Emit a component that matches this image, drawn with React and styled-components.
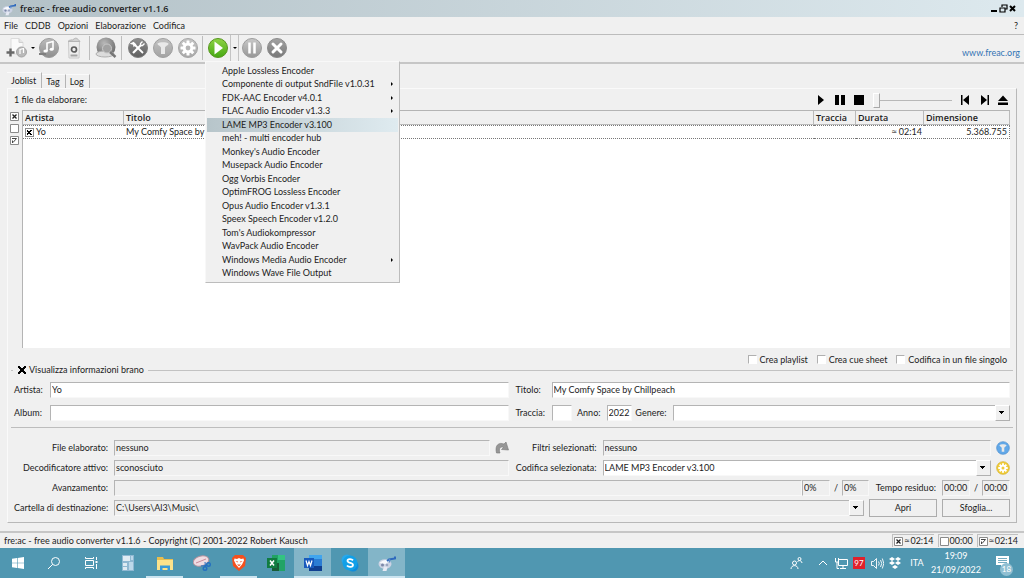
import React from "react";
import styled, { createGlobalStyle, css } from "styled-components";

const GlobalStyle = createGlobalStyle`
    * {
        box-sizing: border-box;
    }

    body {
        margin: 0;
        background: #f0f0f0;
    }

    body, button, input, select {
        font-family: Lato, "Open Sans", sans-serif;
        font-size: 9px;
        line-height: 12px;
        color: #1c1c1c;
    }

    button, input, select {
        margin: 0;
        padding: 0;
        border: 0;
        border-radius: 0;
        outline: 0;
        background: none;
    }
`;

const Window = styled.div`
    display: flex;
    flex-direction: column;
    min-height: 100vh;
`;

const TitleBar = styled.header`
    display: flex;
    align-items: center;
    gap: 4px;
    height: 17px;
    padding: 0 7px 0 2px;
    background: linear-gradient(to right, #b3c1c7, #dde9ee);
`;

const WindowTitle = styled.h1`
    flex: 1;
    margin: 0;
    font-family: "Open Sans", sans-serif;
    font-size: 9px;
    line-height: 12px;
    font-weight: 600;
`;

const WindowButton = styled.button`
    display: block;
    width: 9px;
    height: 9px;
    margin-left: -4px;
`;

const MenuBar = styled.nav`
    display: flex;
    align-items: center;
    gap: 7px;
    height: 18px;
    padding: 0 6px 0 4px;
    border-bottom: 1px solid #bcbcbc;
`;

const MenuButton = styled.button`
    margin-left: ${props => (props.$end ? "auto" : "0")};
`;

const ToolBar = styled.div`
    display: flex;
    align-items: center;
    height: 29px;
    padding: 0 4px 1px;
    border-bottom: 2px solid #c6c6c6;
`;

const ToolButton = styled.button`
    display: grid;
    place-items: center;
    width: 25px;
    height: 26px;
`;

const DropArrow = styled.button`
    display: grid;
    place-items: center;
    width: ${props => (props.$framed ? 9 : 7)}px;
    height: 26px;
    border-left: ${props => (props.$framed ? "1px solid #c4c4c4" : "0")};
    border-right: ${props => (props.$framed ? "1px solid #c4c4c4" : "0")};

    &::before {
        content: "";
        border: 2px solid transparent;
        border-top-color: #000;
        border-bottom: 0;
    }
`;

const ToolSeparator = styled.span`
    width: 1px;
    height: 24px;
    margin: 0 ${props => (props.$tight ? 2 : 3)}px;
    background: #bdbdbd;
`;

const EncodeGroup = styled.div`
    position: relative;
    display: flex;
`;

const EncoderMenu = styled.ul`
    position: absolute;
    z-index: 1;
    top: 100%;
    left: 0;
    display: flex;
    flex-direction: column;
    width: 195px;
    height: 222px;
    margin: 0;
    padding: 2px 1px;
    list-style: none;
    background: #f0f0f0;
    border: 1px solid #bcbcbc;
    border-top-color: #f8f8f8;
    border-left-color: #f8f8f8;
`;

const EncoderItem = styled.li`
    flex: 1;
    display: flex;
    background: ${props =>
        props.$active
            ? "linear-gradient(to right, #b7c5ca, #dfebf0)"
            : "transparent"};

    button {
        flex: 1;
        display: flex;
        align-items: center;
        justify-content: space-between;
        padding: 0 5px 0 15px;
        text-align: left;
    }
`;

const SubmenuArrow = styled.span`
    border: 2px solid transparent;
    border-left-color: #000;
    border-right: 0;
`;

const SiteLink = styled.a`
    margin-left: auto;
    color: #3474b4;
    text-decoration: none;
    padding-top: 9px;
`;

const Content = styled.main`
    flex: 1;
    display: flex;
    flex-direction: column;
    padding: 8px 7px 8px 7px;
`;

const Tabs = styled.div`
    display: flex;
    align-items: flex-end;
    height: 16px;
`;

const Tab = styled.button`
    height: ${props => (props.$active ? 16 : 14)}px;
    padding: 0 5px 0 4px;
    border-right: 1px solid #b4b4b4;
    border-top: 1px solid #fafafa;
`;

const Panel = styled.section`
    flex: 1;
    display: flex;
    flex-direction: column;
    padding-bottom: 6px;
    border: 1px solid #b8b8b8;
    border-top-color: #fafafa;
    border-left-color: #fafafa;
`;

const Player = styled.div`
    display: flex;
    align-items: center;
    height: 21px;
    padding: 1px 6px 0;
    gap: 5px;
`;

const Summary = styled.span`
    flex: 1;
`;

const PlayerButton = styled.button`
    display: block;
    width: 14px;
    height: 14px;
`;

const Seek = styled.input`
    appearance: none;
    width: 79px;
    height: 16px;
    margin: 0 1px 0 2px;
    background: linear-gradient(#b8b8b8, #b8b8b8) center / 100% 1px no-repeat;

    &::-webkit-slider-thumb {
        appearance: none;
        width: 7px;
        height: 15px;
        background: #f0f0f0;
        border: 1px solid #a8a8a8;
        border-top-color: #fff;
        border-left-color: #fff;
    }
`;

const ListArea = styled.div`
    flex: 1;
    display: flex;
    gap: 2px;
    padding: 0 6px 0 2px;
`;

const SelectColumn = styled.div`
    display: flex;
    flex-direction: column;
    gap: 3px;
    width: 10px;
    padding: 2px 0;
`;

const MarkButton = styled.button`
    display: block;
    flex: none;
    width: 9px;
    height: 9px;
`;

const TrackList = styled.div`
    flex: 1;
    background: #fff;
    border-left: 1px solid #b4b4b4;
    border-top: 1px solid #b4b4b4;
`;

const Table = styled.table`
    width: 100%;
    table-layout: fixed;
    border-collapse: separate;
    border-spacing: 0;

    th {
        height: 14px;
        padding: 0 2px;
        font-family: "Open Sans", sans-serif;
        font-weight: 600;
        text-align: left;
        background: #f0f0f0;
        border-right: 1px solid #bababa;
        border-bottom: 1px solid #bababa;
    }

    td {
        height: 14px;
        padding: 0 2px;
        white-space: nowrap;
        border-top: 1px dotted #777;
        border-bottom: 1px dotted #777;
    }

    td:last-child {
        border-right: 1px dotted #777;
    }
`;

const Col = styled.col`
    width: ${props => props.$width};
`;

const NumberCell = styled.td`
    text-align: right;
`;

const Approx = styled.span`
    font-family: "Open Sans", sans-serif;
`;

const TrackCell = styled.label`
    display: flex;
    align-items: center;
    gap: 2px;
`;

const CheckBox = styled.input`
    appearance: none;
    flex: none;
    width: 9px;
    height: 9px;
    background-color: ${props => (props.$plain ? "transparent" : "#fff")};
    border: ${props => (props.$plain ? "0" : "1px solid #8a8a8a")};
    ${props =>
        props.$soft &&
        css`
            border-color: #b0b0b0 #fff #fff #b0b0b0;
        `}

    &:checked {
        background-image: linear-gradient(
                45deg,
                transparent 40%,
                #000 40% 60%,
                transparent 60%
            ),
            linear-gradient(
                -45deg,
                transparent 40%,
                #000 40% 60%,
                transparent 60%
            );
        background-size: ${props => (props.$plain ? "8px 8px" : "5px 5px")};
        background-position: center;
        background-repeat: no-repeat;
    }
`;

const Options = styled.div`
    display: flex;
    justify-content: flex-end;
    gap: 9px;
    height: 21px;
    padding: 2px 9px 0;
`;

const Option = styled.label`
    display: flex;
    align-items: center;
    gap: 3px;
`;

const GroupTitle = styled.div`
    display: flex;
    align-items: center;
    gap: 4px;
    height: 2px;
    margin: 0 3px;

    &::before,
    &::after {
        content: "";
        width: 2px;
        height: 1px;
        background: #c2c2c2;
    }

    &::after {
        flex: 1;
    }
`;

const Rule = styled.hr`
    height: 1px;
    margin: 6px 3px 11px;
    border: 0;
    background: #bdbdbd;
`;

const InfoGrid = styled.div`
    display: grid;
    grid-template-columns: 1fr 1fr;
    gap: 6px 7px;
    padding: 10px 6px 0;
`;

const StatusGrid = styled.div`
    display: grid;
    grid-template-columns: 1fr 1fr;
    gap: 3px 7px;
    padding: 0 6px;
`;

const Row = styled.div`
    display: flex;
    align-items: center;
    height: 17px;
    min-width: 0;
    grid-column: ${props => (props.$wide ? "1 / -1" : "auto")};
`;

const Label = styled.label`
    flex: none;
    width: ${props => props.$width};
    padding-right: ${props => (props.$right ? "6px" : "0")};
    text-align: ${props => (props.$right ? "right" : "left")};
    white-space: nowrap;
`;

const sunken = css`
    height: 16px;
    padding: 0 0 0 1px;
    border: 1px solid #f8f8f8;
    border-top-color: #b4b4b4;
    border-left-color: #b4b4b4;
    background: ${props => (props.$muted ? "#efefef" : "#fff")};
`;

const Field = styled.input`
    ${sunken}
    flex: ${props => (props.$width ? "none" : "1")};
    width: ${props => props.$width || "auto"};
    min-width: 0;
`;

const Bar = styled.div`
    ${sunken}
    flex: 1;
`;

const Slash = styled.span`
    width: 12px;
    text-align: center;
`;

const ComboBox = styled.div`
    flex: 1;
    display: grid;
    min-width: 0;

    select,
    &::after {
        grid-area: 1 / 1;
    }

    select {
        ${sunken}
        appearance: none;
        width: 100%;
    }

    &::after {
        content: "";
        justify-self: end;
        align-self: center;
        width: 13px;
        height: 14px;
        pointer-events: none;
        border: 1px solid #b0b0b0;
        border-top-color: #fff;
        border-left-color: #fff;
        background: linear-gradient(#000, #000) 3px 5px / 5px 1px no-repeat,
            linear-gradient(#000, #000) 4px 6px / 3px 1px no-repeat,
            linear-gradient(#000, #000) 5px 7px / 1px 1px no-repeat #f0f0f0;
    }
`;

const SideButton = styled.button`
    display: grid;
    place-items: center;
    flex: none;
    width: 14px;
    height: 16px;
    margin-left: 5px;
`;

const PushButton = styled.button`
    flex: none;
    width: 68px;
    height: 18px;
    margin-left: 5px;
    border: 1px solid #acacac;
`;

const StatusBar = styled.footer`
    display: flex;
    align-items: center;
    gap: 4px;
    height: 17px;
    padding: 0 6px 0 4px;
    border-top: 2px solid #c6c6c6;
`;

const StatusText = styled.span`
    flex: 1;
`;

const StatusCell = styled.span`
    display: flex;
    align-items: center;
    gap: 1px;
    padding-left: 1px;
    white-space: nowrap;
    height: 13px;
    border-top: 1px solid #c0c0c0;
    border-left: 1px solid #c0c0c0;
`;

const TaskBar = styled.div`
    display: flex;
    align-items: stretch;
    height: 30px;
    color: #fff;
    background: #5097b1;
`;

const TaskButton = styled.button`
    display: grid;
    place-items: center;
    width: ${props => props.$width || 37}px;
    background: ${props => (props.$active ? "#83b5c8" : "transparent")};
    border-bottom: 2px solid ${props => (props.$open ? "#cbe4f0" : "transparent")};
    border-top: 2px solid transparent;
    background-clip: border-box;
`;

const Tray = styled.div`
    display: flex;
    align-items: center;
    gap: 4px;
    margin-left: auto;
    padding-right: 11px;
`;

const TrayButton = styled.button`
    display: grid;
    place-items: center;
    min-width: 14px;
    height: 30px;
    color: #fff;
    margin-right: ${props => props.$after || 0}px;
`;

const Clock = styled.time`
    width: 50px;
    text-align: center;
    line-height: 14px;
`;

const Badge = styled.span`
    width: 12px;
    text-align: center;
    font-size: 8px;
    background: #e0202b;
`;

const Notifications = styled.span`
    position: relative;
    width: 20px;
    height: 16px;
    margin-left: 8px;
`;

const Count = styled.span`
    position: absolute;
    right: 0;
    bottom: -5px;
    width: 13px;
    height: 13px;
    border-radius: 50%;
    font-size: 8px;
    line-height: 13px;
    text-align: center;
    background: #8fbfd2;
`;

const Svg = ({ size = 22, box = 22, children }) => (
    <svg
        width={size}
        height={size}
        viewBox={`0 0 ${box} ${box}`}
        fill="none"
        aria-hidden="true"
    >
        {children}
    </svg>
);

const Disc = ({ from = "#c9c9c9", to = "#7c7c7c", ring = "#8b8b8b", id, children }) => (
    <Svg>
        <defs>
            <linearGradient id={id} x1="0" y1="0" x2="0" y2="1">
                <stop offset="0" stopColor={from} />
                <stop offset="1" stopColor={to} />
            </linearGradient>
        </defs>
        <circle cx="11" cy="11" r="9.5" fill={`url(#${id})`} stroke={ring} />
        {children}
    </Svg>
);

const gearTeeth = [0, 45, 90, 135, 180, 225, 270, 315];

const Gear = ({ hole }) => (
    <g>
        {gearTeeth.map(angle => (
            <rect
                key={angle}
                x="9.5"
                y="3.5"
                width="3"
                height="4"
                rx="0.5"
                fill="#fff"
                transform={`rotate(${angle} 11 11)`}
            />
        ))}
        <circle cx="11" cy="11" r="5.2" fill="#fff" />
        <circle cx="11" cy="11" r="2.4" fill={hole} />
    </g>
);

const FunnelShape = () => (
    <path
        d="M5.500 6.500c2-1.600 9-1.600 11 0 0 1.800-3 2.500-3.500 4V17H9v-6.500c-.5-1.500-3.500-2.200-3.500-4Z"
        fill="#e9e9e9"
    />
);

const AppIcon = ({ size }) => (
    <Svg size={size} box={18}>
        <ellipse cx="7" cy="10" rx="6.500" ry="4.800" fill="#ccd3e4" />
        <path d="M1.500 9c3-3 7-4 10-2l-4 3z" fill="#f8f9fd" />
        <circle cx="4.500" cy="11" r="1.500" fill="#7d88a8" />
        <circle cx="9" cy="11" r="1.300" fill="#9ba5c0" />
        <path d="M6 12.500 4.500 17h4L9.500 13z" fill="#e6e9f4" />
        <path d="m9 7 2-1.500 6-1V2.500" stroke="#2f6abd" strokeWidth="2" />
        <path d="M11.500 8.500V5" stroke="#5b89cb" strokeWidth="1.500" />
    </Svg>
);

const AddFileIcon = () => (
    <Svg>
        <path d="M5 1.500h8l4 4V17H5z" fill="#fafafa" stroke="#dcdcdc" />
        <path d="M13 1.500v4h4" fill="#e4e4e4" stroke="#d0d0d0" />
        <circle cx="15.500" cy="15" r="5" fill="#b9b9b9" stroke="#a3a3a3" />
        <path d="M14 17v-4.500l3.500-1v4.500" stroke="#fff" strokeWidth="1.200" />
        <path d="M4.500 11.500v8M.5 15.500h8" stroke="#686868" strokeWidth="2.400" />
    </Svg>
);

const AddDiscIcon = () => (
    <Disc id="disc-add" from="#bcbcbc" to="#8d8d8d" ring="#9b9b9b">
        <path d="M9 14V6l6-1.500V12" stroke="#fff" strokeWidth="1.600" />
        <ellipse cx="7.600" cy="14" rx="2.200" ry="1.600" fill="#fff" />
        <ellipse cx="13.600" cy="12.300" rx="2" ry="1.500" fill="#fff" />
        <path d="M1 17h7" stroke="#808080" strokeWidth="2" />
    </Disc>
);

const BinIcon = () => (
    <Svg>
        <path d="M5.500 4h11l-.5 17H6z" fill="#ededed" stroke="#c9c9c9" />
        <path d="M5 4.500C7 2 9 4 11 2s4 0 6 2.500z" fill="#d2d2d2" stroke="#b5b5b5" />
        <circle cx="11" cy="12.500" r="2.500" stroke="#5c5c5c" strokeWidth="1.700" />
        <path d="M7.500 18.500h7" stroke="#a5a5a5" strokeWidth="2" />
    </Svg>
);

const CddbIcon = () => (
    <Svg>
        <defs>
            <radialGradient id="globe" cx=".4" cy=".3" r=".7">
                <stop offset="0" stopColor="#b8b8b8" />
                <stop offset="1" stopColor="#6f6f6f" />
            </radialGradient>
        </defs>
        <circle cx="11" cy="10" r="9.500" fill="url(#globe)" />
        <ellipse cx="10" cy="17" rx="9" ry="3" fill="#dcdcdc" stroke="#b0b0b0" />
        <circle cx="12" cy="11.500" r="4.500" fill="#a2a2a2" stroke="#c9c9c9" />
        <path d="m15 15 5.500 5" stroke="#777" strokeWidth="2.500" />
    </Svg>
);

const SettingsIcon = () => (
    <Disc id="disc-settings" from="#8f8f8f" to="#5f5f5f" ring="#808080">
        <path d="M7.500 7.500 16 16" stroke="#fff" strokeWidth="1.800" />
        <path d="m6 16 8-8" stroke="#fff" strokeWidth="2.200" />
        <path
            d="M15.500 4.500 13.500 6.500v2h2l2-2M4.500 6.500l2 .5.5 2 1.500-1.500-2-2z"
            stroke="#fff"
            strokeWidth="1.300"
        />
    </Disc>
);

const FilterIcon = () => (
    <Disc id="disc-filter" from="#c2c2c2" to="#a3a3a3" ring="#a0a0a0">
        <FunnelShape />
    </Disc>
);

const EncoderIcon = () => (
    <Disc id="disc-encoder" from="#c6c6c6" to="#a8a8a8" ring="#a6a6a6">
        <Gear hole="#b5b5b5" />
    </Disc>
);

const PlayIcon = () => (
    <Disc id="disc-play" from="#8fd345" to="#45a812" ring="#57961f">
        <path d="M7.500 4.500v13l8.500-6.500z" fill="#fff" />
    </Disc>
);

const PauseIcon = () => (
    <Disc id="disc-pause" from="#c9c9c9" to="#969696" ring="#9d9d9d">
        <path d="M8.500 5.500v11M13.500 5.500v11" stroke="#fff" strokeWidth="2.500" />
    </Disc>
);

const StopIcon = () => (
    <Disc id="disc-stop" from="#a3a3a3" to="#787878">
        <path d="m7 7 8 8m0-8-8 8" stroke="#fff" strokeWidth="3" strokeLinecap="round" />
    </Disc>
);

const Mark = ({ kind }) => (
    <Svg size={9} box={9}>
        <path d="M.5.5h8v8h-8z" fill="#fff" stroke="#8a8a8a" />
        {kind === "all" && (
            <path d="m2.500 2.500 4 4m0-4-4 4" stroke="#222" strokeWidth="1.300" />
        )}
        {kind === "toggle" && (
            <path d="M2 2.500h4.500L3 6.500M2.500 4.500V7" stroke="#444" />
        )}
    </Svg>
);

const playerShapes = {
    Play: "M4 2v10l6-5z",
    Pause: "M2 2h4v10H2zM8 2h4v10H8z",
    Stop: "M2 2h10v10H2z",
    Previous: "M3 2h1.500v10H3zM11 2v10L5 7z",
    Next: "M10.500 2H12v10h-1.500zM4 2v10l6-5z",
    Eject: "M7 2.500 12 8H2zM2 9.500h10V12H2z"
};

const PlayerControl = ({ name }) => (
    <PlayerButton aria-label={name}>
        <Svg size={14} box={14}>
            <path d={playerShapes[name]} fill="#000" />
        </Svg>
    </PlayerButton>
);

const encoders = [
    { name: "Apple Lossless Encoder" },
    { name: "Componente di output SndFile v1.0.31", submenu: true },
    { name: "FDK-AAC Encoder v4.0.1", submenu: true },
    { name: "FLAC Audio Encoder v1.3.3", submenu: true },
    { name: "LAME MP3 Encoder v3.100", active: true },
    { name: "meh! - multi encoder hub" },
    { name: "Monkey's Audio Encoder" },
    { name: "Musepack Audio Encoder" },
    { name: "Ogg Vorbis Encoder" },
    { name: "OptimFROG Lossless Encoder" },
    { name: "Opus Audio Encoder v1.3.1" },
    { name: "Speex Speech Encoder v1.2.0" },
    { name: "Tom's Audiokompressor" },
    { name: "WavPack Audio Encoder" },
    { name: "Windows Media Audio Encoder", submenu: true },
    { name: "Windows Wave File Output" }
];

const MainToolBar = () => (
    <ToolBar>
        <ToolButton aria-label="Aggiungi file"><AddFileIcon /></ToolButton>
        <DropArrow aria-label="Altri modi di aggiungere" />
        <ToolButton aria-label="Aggiungi CD"><AddDiscIcon /></ToolButton>
        <ToolButton aria-label="Svuota lista"><BinIcon /></ToolButton>
        <ToolSeparator />
        <ToolButton aria-label="CDDB"><CddbIcon /></ToolButton>
        <ToolSeparator />
        <ToolButton aria-label="Impostazioni"><SettingsIcon /></ToolButton>
        <ToolButton aria-label="Filtri"><FilterIcon /></ToolButton>
        <ToolButton aria-label="Encoder"><EncoderIcon /></ToolButton>
        <ToolSeparator $tight />
        <EncodeGroup>
            <ToolButton aria-label="Avvia codifica"><PlayIcon /></ToolButton>
            <DropArrow $framed aria-label="Scegli encoder" aria-expanded="true" />
            <EncoderMenu>
                {encoders.map(({ name, submenu, active }) => (
                    <EncoderItem key={name} $active={active}>
                        <button>
                            {name}
                            {submenu && <SubmenuArrow />}
                        </button>
                    </EncoderItem>
                ))}
            </EncoderMenu>
        </EncodeGroup>
        <ToolButton aria-label="Pausa"><PauseIcon /></ToolButton>
        <ToolButton aria-label="Interrompi"><StopIcon /></ToolButton>
        <SiteLink href="https://www.freac.org">www.freac.org</SiteLink>
    </ToolBar>
);

const Joblist = () => (
    <>
        <Player>
            <Summary>1 file da elaborare:</Summary>
            <PlayerControl name="Play" />
            <PlayerControl name="Pause" />
            <PlayerControl name="Stop" />
            <Seek type="range" defaultValue="0" aria-label="Posizione" />
            <PlayerControl name="Previous" />
            <PlayerControl name="Next" />
            <PlayerControl name="Eject" />
        </Player>
        <ListArea>
            <SelectColumn>
                <MarkButton aria-label="Seleziona tutti"><Mark kind="all" /></MarkButton>
                <MarkButton aria-label="Deseleziona tutti"><Mark /></MarkButton>
                <MarkButton aria-label="Inverti selezione"><Mark kind="toggle" /></MarkButton>
            </SelectColumn>
            <TrackList>
                <Table>
                    <colgroup>
                        <Col $width="101px" />
                        <Col />
                        <Col $width="42px" />
                        <Col $width="68px" />
                        <Col $width="86px" />
                    </colgroup>
                    <thead>
                        <tr>
                            <th>Artista</th>
                            <th>Titolo</th>
                            <th>Traccia</th>
                            <th>Durata</th>
                            <th>Dimensione</th>
                        </tr>
                    </thead>
                    <tbody>
                        <tr>
                            <td>
                                <TrackCell>
                                    <CheckBox type="checkbox" defaultChecked />
                                    Yo
                                </TrackCell>
                            </td>
                            <td>My Comfy Space by Chillpeach</td>
                            <td />
                            <NumberCell><Approx>≈</Approx> 02:14</NumberCell>
                            <NumberCell>5.368.755</NumberCell>
                        </tr>
                    </tbody>
                </Table>
            </TrackList>
        </ListArea>
        <Options>
            {["Crea playlist", "Crea cue sheet", "Codifica in un file singolo"].map(
                text => (
                    <Option key={text}>
                        <CheckBox type="checkbox" $soft />
                        {text}
                    </Option>
                )
            )}
        </Options>
    </>
);

const TrackInfo = () => (
    <>
        <GroupTitle>
            <Option>
                <CheckBox type="checkbox" defaultChecked $plain />
                Visualizza informazioni brano
            </Option>
        </GroupTitle>
        <InfoGrid>
            <Row>
                <Label htmlFor="artist" $width="36px">Artista:</Label>
                <Field id="artist" defaultValue="Yo" />
            </Row>
            <Row>
                <Label htmlFor="title" $width="36px">Titolo:</Label>
                <Field id="title" defaultValue="My Comfy Space by Chillpeach" />
            </Row>
            <Row>
                <Label htmlFor="album" $width="36px">Album:</Label>
                <Field id="album" />
            </Row>
            <Row>
                <Label htmlFor="track" $width="36px">Traccia:</Label>
                <Field id="track" $width="20px" />
                <Label htmlFor="year" $width="35px" $right>Anno:</Label>
                <Field id="year" $width="25px" defaultValue="2022" />
                <Label htmlFor="genre" $width="41px" $right>Genere:</Label>
                <ComboBox>
                    <select id="genre" />
                </ComboBox>
            </Row>
        </InfoGrid>
    </>
);

const EncodeStatus = () => (
    <StatusGrid>
        <Row>
            <Label htmlFor="file" $width="100px" $right>File elaborato:</Label>
            <Field id="file" $muted readOnly value="nessuno" />
            <SideButton aria-label="Salta brano">
                <Svg size={14} box={14}>
                    <path
                        d="M1.500 12C-.5 4 4 1 9 3l2-2 2.500 8-7-.5 2-2C5 5 3.500 8 5 12z"
                        fill="#969696"
                        stroke="#777"
                        strokeWidth=".6"
                    />
                </Svg>
            </SideButton>
        </Row>
        <Row>
            <Label htmlFor="filters" $width="87px" $right>Filtri selezionati:</Label>
            <Field id="filters" $muted readOnly value="nessuno" />
            <SideButton aria-label="Configura filtri">
                <Svg size={14}>
                    <circle cx="11" cy="11" r="10" fill="#62a8e8" stroke="#4a8ccb" />
                    <FunnelShape />
                </Svg>
            </SideButton>
        </Row>
        <Row>
            <Label htmlFor="decoder" $width="100px" $right>Decodificatore attivo:</Label>
            <Field id="decoder" $muted readOnly value="sconosciuto" />
        </Row>
        <Row>
            <Label htmlFor="encoder" $width="87px" $right>Codifica selezionata:</Label>
            <ComboBox>
                <select id="encoder">
                    <option>LAME MP3 Encoder v3.100</option>
                </select>
            </ComboBox>
            <SideButton aria-label="Configura encoder">
                <Svg size={14}>
                    <circle cx="11" cy="11" r="10" fill="#f0cc3a" stroke="#d2ac22" />
                    <Gear hole="#f0cc3a" />
                </Svg>
            </SideButton>
        </Row>
        <Row $wide>
            <Label as="span" $width="100px" $right>Avanzamento:</Label>
            <Bar $muted role="progressbar" aria-label="Avanzamento" aria-valuenow="0" />
            <Field $muted $width="28px" readOnly value="0%" aria-label="Brano" />
            <Slash>/</Slash>
            <Field $muted $width="27px" readOnly value="0%" aria-label="Totale" />
            <Label htmlFor="left" $width="73px" $right>Tempo residuo:</Label>
            <Field id="left" $muted $width="28px" readOnly value="00:00" />
            <Slash>/</Slash>
            <Field $muted $width="28px" readOnly value="00:00" aria-label="Tempo totale" />
        </Row>
        <Row $wide>
            <Label htmlFor="folder" $width="100px" $right>Cartella di destinazione:</Label>
            <ComboBox $muted>
                <select id="folder">
                    <option>C:\Users\Al3\Music\</option>
                </select>
            </ComboBox>
            <PushButton>Apri</PushButton>
            <PushButton>Sfoglia...</PushButton>
        </Row>
    </StatusGrid>
);

const apps = [
    {
        name: "Calcolatrice",
        icon: (
            <g>
                <path d="M3 1h12v16H3z" fill="#8fb8d2" />
                <path d="M4 2h7v5H4zM4 9h4v3H4zM4 13h4v3H4z" fill="#dfebf3" />
                <path d="M10 8h4v8h-4zM12 2h2v4h-2z" fill="#bcd8ea" />
            </g>
        )
    },
    {
        name: "Esplora file",
        open: true,
        icon: (
            <g>
                <path d="M1 3h6l1 2h9v11H1z" fill="#e8bd4e" />
                <path d="M1 6h16v10H1z" fill="#fbe28b" />
                <path d="M4 17v-5.500h10V17h-2.500v-3h-5v3z" fill="#3a9bd8" />
            </g>
        )
    },
    {
        name: "Strumento di cattura",
        icon: (
            <g>
                <ellipse cx="8" cy="7" rx="8" ry="5" fill="#efdce2" stroke="#b08f9b" transform="rotate(-15 8 7)" />
                <path d="m3 9 10-4" stroke="#c98a9b" />
                <circle cx="12" cy="14.500" r="1.800" stroke="#246fc0" strokeWidth="1.400" />
                <circle cx="15.500" cy="10.500" r="1.800" stroke="#246fc0" strokeWidth="1.400" />
                <path d="m8 12 6-.5M12 8l.5 5" stroke="#246fc0" />
            </g>
        )
    },
    {
        name: "Brave",
        open: true,
        icon: (
            <g>
                <path d="m5 1-3 3 1 8 6 5 6-5 1-8-3-3z" fill="#f4501e" />
                <path d="m4.500 4.500 2.500.5 2-1 2 1 2.500-.5.5 2-2 4L9 14l-3-3.500-2-4z" fill="#fff" />
                <path d="m5.500 7 2.500.5-.5 1zM12.500 7l-2.500.5.5 1zM7 10.500h4l-2 1.800z" fill="#f4501e" />
            </g>
        )
    },
    {
        name: "Excel",
        icon: (
            <g>
                <path d="M5 1h13v16H5z" fill="#21a366" />
                <path d="M11 1h7v5h-7z" fill="#33c481" />
                <path d="M5 9h7v8H5z" fill="#185c37" />
                <path d="M0 4h10v10H0z" fill="#107c41" />
                <path d="m3 6.500 4 5m0-5-4 5" stroke="#fff" strokeWidth="1.500" />
            </g>
        )
    },
    {
        name: "Word",
        open: true,
        active: true,
        icon: (
            <g>
                <path d="M5 1h13v16H5z" fill="#2b7cd3" />
                <path d="M5 1h13v4H5z" fill="#41a5ee" />
                <path d="M5 12h13v5H5z" fill="#103f91" />
                <path d="M0 4h10v10H0z" fill="#185abd" />
                <path d="m2 6.500 1.500 5 1.500-4 1.500 4 1.500-5" stroke="#fff" strokeWidth="1.200" />
            </g>
        )
    },
    {
        name: "Skype",
        open: true,
        icon: (
            <g>
                <circle cx="6" cy="6" r="5.500" fill="#28a8ea" />
                <circle cx="12" cy="12" r="5.500" fill="#0f8bdb" />
                <circle cx="9" cy="9" r="7.500" fill="#12a0e8" />
                <path
                    d="M12 6.300C10.500 4.500 6.500 4.700 6.500 6.800c0 2.700 5.500 1.500 5.500 4.200 0 2.300-4.500 2.500-6 .5"
                    stroke="#fff"
                    strokeWidth="1.800"
                />
            </g>
        )
    },
    { name: "fre:ac", open: true, active: true }
];

const WindowsTaskBar = () => (
    <TaskBar>
        <TaskButton $width={36} aria-label="Start">
            <Svg size={12} box={12}>
                <path
                    d="M0 1.700 5 1v4.700H0zM5.600.9 12 0v5.700H5.600zM0 6.300h5V11l-5-.7zM5.600 6.300H12V12l-6.400-.9z"
                    fill="#fff"
                />
            </Svg>
        </TaskButton>
        <TaskButton $width={36} aria-label="Cerca">
            <Svg size={14} box={14}>
                <circle cx="8.500" cy="5.500" r="4" stroke="#fff" />
                <path d="M5.700 8.300 1 13" stroke="#fff" />
            </Svg>
        </TaskButton>
        <TaskButton $width={37} aria-label="Visualizzazione attività">
            <Svg size={14} box={14}>
                <path d="M1.500 4.500h8v5h-8zM1.500 1v1.500h8V1M1.500 13v-1.500h8V13M12.500 1v3M12.500 8v5" stroke="#fff" />
                <path d="M11.500 5h2v2h-2z" fill="#fff" />
            </Svg>
        </TaskButton>
        {apps.map(({ name, icon, open, active }) => (
            <TaskButton key={name} $open={open} $active={active} aria-label={name}>
                {icon ? <Svg size={18} box={18}>{icon}</Svg> : <AppIcon size={18} />}
            </TaskButton>
        ))}
        <Tray>
            <TrayButton aria-label="Contatti" $after={9}>
                <Svg size={13} box={13}>
                    <circle cx="4.500" cy="6" r="2" stroke="#fff" />
                    <path d="M1 12c0-4.500 7-4.500 7 0M7.500 5c.5-2 4-2 4.500 1" stroke="#fff" />
                    <circle cx="9.500" cy="2" r="1.500" stroke="#fff" />
                </Svg>
            </TrayButton>
            <TrayButton aria-label="Icone nascoste">
                <Svg size={10} box={10}>
                    <path d="m1 7 4-4 4 4" stroke="#fff" />
                </Svg>
            </TrayButton>
            <TrayButton aria-label="Rete">
                <Svg size={13} box={13}>
                    <path d="M3.500 2.500h9v6h-9zM8 8.500v3M5 11.500h6M.5 1v4h3V1M2 5v6.500h2" stroke="#fff" />
                </Svg>
            </TrayButton>
            <TrayButton aria-label="Temperatura">
                <Badge>97</Badge>
            </TrayButton>
            <TrayButton aria-label="Volume">
                <Svg size={13} box={13}>
                    <path d="M.5 4.500h2l3-3v10l-3-3h-2zM7.500 4.500q1.500 2 0 4M9.500 3q2.500 3.500 0 7M11.300 1.500q3 5 0 10" stroke="#fff" strokeWidth=".9" />
                </Svg>
            </TrayButton>
            <TrayButton aria-label="Dropbox" $after={4}>
                <Svg size={12} box={12}>
                    <path
                        d="m3 0 3 2-3 2-3-2zM9 0l3 2-3 2-3-2zM3 4l3 2-3 2-3-2zM9 4l3 2-3 2-3-2zM6 8l3 2-3 2-3-2z"
                        fill="#fff"
                    />
                </Svg>
            </TrayButton>
            <TrayButton $after={3}>ITA</TrayButton>
            <Clock>
                19:09
                <br />
                21/09/2022
            </Clock>
            <TrayButton aria-label="Notifiche, 18 nuove">
                <Notifications>
                    <Svg size={14} box={14}>
                        <path d="M0 1h13v9H8l-3 3v-3H0z" fill="#fff" />
                        <path d="M2 3.500h9M2 5.500h9M2 7.500h9" stroke="#5097b1" strokeWidth=".8" />
                    </Svg>
                    <Count>18</Count>
                </Notifications>
            </TrayButton>
        </Tray>
    </TaskBar>
);

const App = () => (
    <Window>
        <GlobalStyle />
        <TitleBar>
            <AppIcon size={14} />
            <WindowTitle>fre:ac - free audio converter v1.1.6</WindowTitle>
            <WindowButton aria-label="Riduci">
                <Svg size={9} box={9}>
                    <path d="M1 7h6" stroke="#000" strokeWidth="2" />
                </Svg>
            </WindowButton>
            <WindowButton aria-label="Ripristina">
                <Svg size={9} box={9}>
                    <path d="M3 3V1h5v4H6M1 4h5v4H1z" stroke="#000" strokeWidth="1.200" />
                </Svg>
            </WindowButton>
            <WindowButton aria-label="Chiudi">
                <Svg size={9} box={9}>
                    <path d="m2 2 5 5m0-5-5 5" stroke="#000" strokeWidth="2" />
                </Svg>
            </WindowButton>
        </TitleBar>
        <MenuBar>
            {["File", "CDDB", "Opzioni", "Elaborazione", "Codifica"].map(text => (
                <MenuButton key={text}>{text}</MenuButton>
            ))}
            <MenuButton $end>?</MenuButton>
        </MenuBar>
        <MainToolBar />
        <Content>
            <Tabs>
                <Tab $active>Joblist</Tab>
                <Tab>Tag</Tab>
                <Tab>Log</Tab>
            </Tabs>
            <Panel>
                <Joblist />
                <TrackInfo />
                <Rule />
                <EncodeStatus />
            </Panel>
        </Content>
        <StatusBar>
            <StatusText>
                fre:ac - free audio converter v1.1.6 - Copyright (C) 2001-2022 Robert
                Kausch
            </StatusText>
            <StatusCell><Mark kind="all" /><Approx>≈</Approx> 02:14</StatusCell>
            <StatusCell><Mark />00:00</StatusCell>
            <StatusCell><Mark kind="toggle" /><Approx>≈</Approx> 02:14</StatusCell>
        </StatusBar>
        <WindowsTaskBar />
    </Window>
);

export default App;
